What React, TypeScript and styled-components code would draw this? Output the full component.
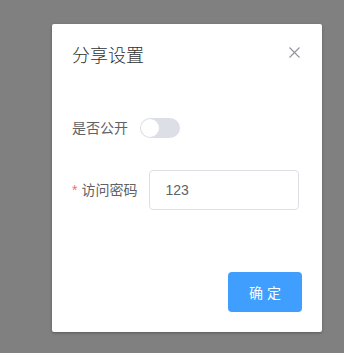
import { useState } from "react";
import styled, { createGlobalStyle } from "styled-components";

const Global = createGlobalStyle`
  html, body {
    margin: 0;
    padding: 0;
    background: #808080;
    font-family: "Liberation Sans", "Noto Sans CJK SC", sans-serif;
  }
`;

const Page = styled.div`
  width: 344px;
  height: 353px;
  padding: 24px 0 0 52px;
  box-sizing: border-box;
`;

const Dialog = styled.div`
  position: relative;
  width: 270px;
  background: #fff;
  border-radius: 2px;
  box-shadow: 0 1px 3px rgba(0, 0, 0, 0.3);
  box-sizing: border-box;
`;

const Header = styled.div`
  padding: 20px 20px 10px;
`;

const Title = styled.span`
  font-size: 18px;
  line-height: 24px;
  font-weight: 300;
  color: #303133;
`;

const Close = styled.button`
  position: absolute;
  top: 20px;
  right: 20px;
  width: 16px;
  height: 16px;
  padding: 0;
  border: none;
  background: transparent;
  display: flex;
  align-items: center;
  justify-content: center;
  cursor: pointer;
`;

const Body = styled.div`
  padding: 30px 20px;
`;

const FormItem = styled.div`
  display: flex;
  align-items: center;
  height: 40px;
  margin-bottom: 22px;
`;

const Label = styled.label`
  font-size: 14px;
  color: #606266;
  padding-right: 12px;
  line-height: 40px;
`;

const Star = styled.span`
  color: #f56c6c;
  margin-right: 4px;
`;

const Switch = styled.span<{ $on: boolean }>`
  position: relative;
  width: 40px;
  height: 20px;
  border-radius: 10px;
  background: ${({ $on }) => ($on ? "#409eff" : "#dcdfe6")};
  cursor: pointer;

  &::after {
    content: "";
    position: absolute;
    top: 1px;
    left: ${({ $on }) => ($on ? "21px" : "1px")};
    width: 18px;
    height: 18px;
    border-radius: 50%;
    background: #fff;
  }
`;

const Input = styled.input`
  width: 150px;
  height: 40px;
  box-sizing: border-box;
  border: 1px solid #dcdfe6;
  border-radius: 4px;
  padding: 0 15px;
  font-size: 14px;
  color: #606266;
  font-family: inherit;
  outline: none;
`;

const Footer = styled.div`
  padding: 10px 20px 20px;
  display: flex;
  justify-content: flex-end;
`;

const Primary = styled.button`
  width: 74px;
  height: 40px;
  border: none;
  border-radius: 4px;
  background: #409eff;
  color: #fff;
  font-size: 14px;
  font-family: inherit;
  cursor: pointer;
`;

export default function App() {
  const [open, setOpen] = useState(false);
  return (
    <>
      <Global />
      <Page>
        <Dialog>
          <Header>
            <Title>分享设置</Title>
            <Close aria-label="close">
              <svg width="11" height="11" viewBox="0 0 11 11">
                <path d="M0.5 0.5L10.5 10.5M10.5 0.5L0.5 10.5" stroke="#909399" strokeWidth="1.1" />
              </svg>
            </Close>
          </Header>
          <Body>
            <FormItem>
              <Label>是否公开</Label>
              <Switch $on={open} onClick={() => setOpen(!open)} />
            </FormItem>
            <FormItem>
              <Label>
                <Star>*</Star>访问密码
              </Label>
              <Input defaultValue="123" />
            </FormItem>
          </Body>
          <Footer>
            <Primary>确 定</Primary>
          </Footer>
        </Dialog>
      </Page>
    </>
  );
}
